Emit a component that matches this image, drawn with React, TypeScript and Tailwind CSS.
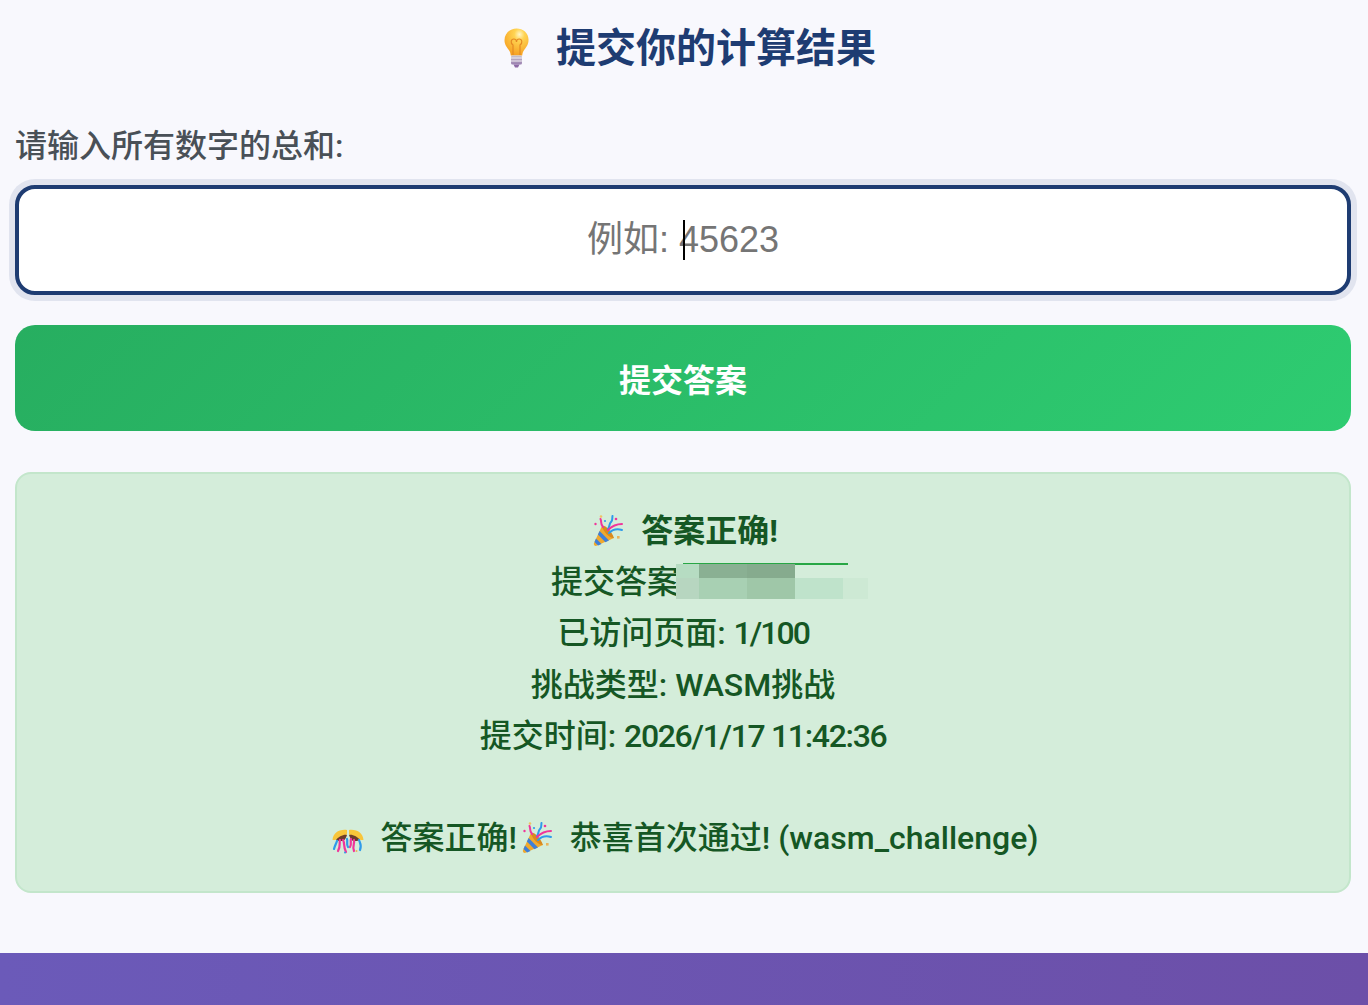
const page = "font-['Roboto','Noto_Sans_CJK_SC',sans-serif]";

function Bulb() {
  return (
    <svg viewBox="0 0 25 40" className="h-[40px] w-[25px]">
      <defs>
        <radialGradient id="bulbGlow" cx="0.62" cy="0.22" r="0.85">
          <stop offset="0" stopColor="#fff6c8" />
          <stop offset="0.25" stopColor="#ffd452" />
          <stop offset="1" stopColor="#f59a1c" />
        </radialGradient>
        <linearGradient id="bulbBase" x1="0" y1="0" x2="0" y2="1">
          <stop offset="0" stopColor="#c8c3cc" />
          <stop offset="1" stopColor="#9a7fb0" />
        </linearGradient>
      </defs>
      <path d="M12.5 0.5C5.7 0.5 0.5 5.6 0.5 12.2c0 4.6 2.6 7.3 4.5 10 1.2 1.7 1.6 3.4 1.8 5.3h11.4c.2-1.9.6-3.6 1.8-5.3 1.9-2.7 4.5-5.4 4.5-10C25 5.6 19.3 0.5 12.5 0.5z" fill="url(#bulbGlow)" />
      <path d="M9 27V17c-3-2-2-6 .8-6 2 0 2.7 1.7 2.7 3 0-1.3.7-3 2.7-3 2.8 0 3.8 4 .8 6v10" fill="none" stroke="#e58a24" strokeWidth="1.2" />
      <rect x="7" y="27.5" width="11" height="9" rx="1.5" fill="url(#bulbBase)" />
      <path d="M7 30h11M7 33h11" stroke="#f1edf3" strokeWidth="1" />
      <path d="M9.5 36.5h6L14 39.5h-3z" fill="#8d6aa6" />
    </svg>
  );
}

function Popper() {
  return (
    <svg viewBox="0 0 32 32" className="h-[32px] w-[32px]">
      <path d="M9 11 1 28c-.7 1.8.7 3.4 2.6 2.8L21 23z" fill="#f0a92e" />
      <path d="M6.6 16 16 25.6l-3.6 1.6-7.5-7.6zM3 23.500 8.500 29l-3.400 1.500L1.500 27z" fill="#3f7fd8" />
      <path d="M9 11c3-1 9 4 12 12-4 .5-11-6-12-12z" fill="#d98a1e" />
      <path d="M10 12C7 9 9 7 7.500 4" fill="none" stroke="#f0359b" strokeWidth="2" strokeLinecap="round" />
      <path d="M15 14c2-3 1-5 3-7s1-4 1.500-6" fill="none" stroke="#2f9bea" strokeWidth="2" strokeLinecap="round" />
      <path d="M16 18c3-3 7-5 13-3" fill="none" stroke="#2f9bea" strokeWidth="2" strokeLinecap="round" />
      <path d="M15 15c4-4 8-6 14-6" fill="none" stroke="#f0359b" strokeWidth="2" strokeLinecap="round" />
      <circle cx="8" cy="1.500" r="1.300" fill="#f2c265" />
      <circle cx="2.500" cy="9" r="1.200" fill="#f0359b" />
      <circle cx="23" cy="4" r="1.300" fill="#f0359b" />
      <circle cx="12" cy="6" r="1.100" fill="#2f9bea" />
      <rect x="24" y="21" width="2.600" height="2.600" fill="#eab35a" />
    </svg>
  );
}

function ConfettiBall() {
  return (
    <svg viewBox="0 0 32 25" className="h-[25px] w-[32px]">
      <path d="M15 1C7 0 1 4 .5 11c2 .5 5-1 8-1 3 0 5-3 6.500-5z" fill="#f8c53a" />
      <path d="M17 1c8-1 14 3 14.500 10-2 .5-5-1-8-1-3 0-5-3-6.500-5z" fill="#f8c53a" />
      <path d="M4 11c2-3 8-6 11-5-1 3-2 5-4 6-3 0-5 0-7-1zM28 11c-2-3-8-6-11-5 1 3 2 5 4 6 3 0 5 0 7-1z" fill="#6b3b2a" />
      <path d="M8 11c-1 3 1 5-2 11M11 11c2 3 0 6 3 12" fill="none" stroke="#f0359b" strokeWidth="2.200" strokeLinecap="round" />
      <path d="M5 12c-1 3-2 4-3 8M15 10c1 3-1 5 1 8" fill="none" stroke="#2f9bea" strokeWidth="2.200" strokeLinecap="round" />
      <path d="M22 11c1 3-2 6 0 11M19 10c-1 2 1 5-1 8" fill="none" stroke="#f0359b" strokeWidth="2.200" strokeLinecap="round" />
      <path d="M27 11c1 3 3 5 1 10" fill="none" stroke="#2f9bea" strokeWidth="2.200" strokeLinecap="round" />
      <circle cx="13" cy="23.500" r="1" fill="#2f9bea" />
      <circle cx="24.500" cy="22" r="1" fill="#eab35a" />
    </svg>
  );
}

function Redacted() {
  return (
    <span className="relative inline-block h-[20px] w-[5px] align-baseline">
      <span className="absolute top-[-10px] left-[4px] h-[1.5px] w-[165px] bg-[#28a745]" />
      <span className="absolute top-[-9px] left-[-3px] grid h-[35px] w-[192px] grid-cols-[23px_48px_48px_48px_25px] grid-rows-[14px_21px]">
        <span className="bg-[#b6dcc2]" />
        <span className="bg-[#8ab093]" />
        <span className="bg-[#86ab8e]" />
        <span />
        <span />
        <span className="bg-[#b7d6c0]" />
        <span className="bg-[#a8d0b3]" />
        <span className="bg-[#9fc7a8]" />
        <span className="bg-[#bfe3cb]" />
        <span className="bg-[#cde9d4]" />
      </span>
    </span>
  );
}

export default function App() {
  return (
    <div className={`flex h-[1005px] flex-col overflow-hidden bg-[#f8f8fd] ${page}`}>
      <div className="flex-1 pr-[17px] pl-[15px]">
        <h3 className="mt-[24px] text-center text-[40px] leading-[50px] font-bold text-[#1e3c72]">
          <span className="inline-block w-[56px] pl-[14px] align-[-6px]">
            <Bulb />
          </span>{" "}
          提交你的计算结果
        </h3>
        <label className="mt-[47px] block text-[32px] leading-[50px] font-medium text-[#495057]">
          请输入所有数字的总和:
        </label>
        <div className="relative mt-[14px]">
          <input
            type="text"
            placeholder="例如: 45623"
            className="h-[110px] w-full rounded-[20px] border-4 border-[#1e3c72] bg-white text-center font-['Liberation_Sans','Noto_Sans_CJK_SC',sans-serif] text-[36px] shadow-[0_0_0_6px_rgba(30,60,114,0.1)] outline-none placeholder:text-[#757575]"
          />
          <span className="absolute top-[35px] left-[668px] h-[40px] w-[2px] bg-black" />
        </div>
        <button className="mt-[30px] h-[106px] w-full rounded-[20px] bg-[linear-gradient(135deg,#27ae60,#2ecc71)] pt-[5px] text-[32px] font-bold text-white">
          提交答案
        </button>
        <div className="mt-[41px] rounded-[16px] border-2 border-[#c3e6cb] bg-[#d4edda] pt-[32px] pb-[27px] text-center text-[32px] leading-[51.2px] font-medium text-[#155724]">
          <div>
            <strong className="font-bold">
              <span className="inline-block w-[45px] pl-[5px] align-[-5px]">
                <Popper />
              </span>{" "}
              答案正确!
            </strong>
          </div>
          <div>
            提交答案
            <Redacted />
            <span className="inline-block w-[131px]" />
          </div>
          <div>
            已访问页面: <span className="tracking-[-2px]">1/100</span>
          </div>
          <div>挑战类型: WASM挑战</div>
          <div>
            提交时间: <span className="tracking-[-1.33px]">2026/1/17 11:42:36</span>
          </div>
          <div className="h-[51.2px]" />
          <div>
            <span className="inline-block w-[45px] pl-[5px] align-[-5px]">
              <ConfettiBall />
            </span>{" "}
            答案正确!
            <span className="inline-block w-[45px] pl-[5px] align-[-5px]">
              <Popper />
            </span>{" "}
            恭喜首次通过! (wasm_challenge)
          </div>
        </div>
      </div>
      <div className="h-[52px] bg-[linear-gradient(90deg,#6b5ab9,#6c4fa8)]" />
    </div>
  );
}
